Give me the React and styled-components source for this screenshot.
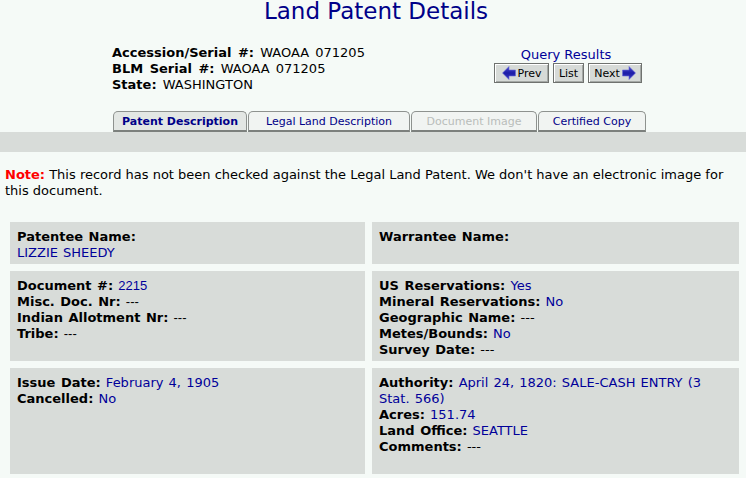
import React from "react";
import styled, { createGlobalStyle } from "styled-components";

const Global = createGlobalStyle`
  html, body { margin: 0; padding: 0; background: #f5faf7; }
  body {
    font-family: "DejaVu Sans", Verdana, sans-serif;
    font-size: 13px;
    color: #000;
  }
`;

const Page = styled.div`
  width: 746px;
`;

const Title = styled.h1`
  margin: -2px 0 -2px;
  padding-left: 6px;
  font-size: 23px;
  line-height: 27px;
  font-weight: normal;
  color: #000088;
  text-align: center;
`;

const HeaderRow = styled.div`
  display: flex;
  align-items: flex-start;
  margin-top: 22px;
  padding-left: 112px;
`;

const InfoBlock = styled.div`
  width: 378px;
  line-height: 16px;
  word-spacing: 2px;
`;

const Line = styled.div`
  line-height: 16px;
  min-height: 16px;
`;

const Label = styled.span`
  font-weight: bold;
`;

const Value = styled.span`
  color: ${(p) => (p.$plain ? "#000" : "#000099")};
  font-family: ${(p) =>
    p.$alt ? '"Liberation Sans", Arial, sans-serif' : 'inherit'};
`;

const QueryBlock = styled.div`
  width: 152px;
  margin-top: 2px;
  display: flex;
  flex-direction: column;
  align-items: center;
`;

const QueryTitle = styled.div`
  color: #000099;
  line-height: 16px;
`;

const ButtonRow = styled.div`
  display: flex;
  column-gap: 4px;
  margin-left: 4px;
`;

const NavButton = styled.button`
  box-sizing: border-box;
  width: ${(p) => p.$w}px;
  height: 20px;
  padding: 0;
  display: flex;
  align-items: center;
  justify-content: center;
  gap: 2px;
  background: #d6dad7;
  border: 1px solid #6f726f;
  box-shadow: inset 1px 1px 0 #ffffff, inset -1px -1px 0 #a4a8a5;
  font-family: "DejaVu Sans", Verdana, sans-serif;
  font-size: 11px;
  color: #000;
  cursor: pointer;
`;

const TabsRow = styled.div`
  display: flex;
  column-gap: 1px;
  margin-top: 18px;
  padding-left: 113px;
`;

const Tab = styled.div`
  box-sizing: border-box;
  width: ${(p) => p.$w}px;
  height: 21px;
  display: flex;
  align-items: center;
  justify-content: center;
  border: 1px solid #8e928f;
  border-bottom: 2px solid #7c807d;
  border-radius: 5px 5px 0 0;
  background: ${(p) => (p.$active ? "#e3e7e4" : "#f1f4f2")};
  font-size: 11px;
  font-weight: ${(p) => (p.$active ? "bold" : "normal")};
  color: ${(p) => (p.$disabled ? "#b9bdba" : "#000088")};
  white-space: nowrap;
`;

const Strip = styled.div`
  height: 20px;
  background: #d8dcd9;
`;

const Note = styled.p`
  margin: 15px 0 0;
  padding: 0 5px;
  line-height: 16px;
`;

const NoteLabel = styled.span`
  color: #ff0000;
  font-weight: bold;
`;

const CardGrid = styled.div`
  display: grid;
  grid-template-columns: 355px 367px;
  gap: 7px;
  margin-top: 23px;
  padding: 0 7px 4px 10px;
`;

const Card = styled.div`
  background: #d8dcd9;
  padding: 7px 12px 3px 7px;
  word-spacing: 1px;
`;

const Arrow = ({ dir }) => (
  <svg width="14" height="14" viewBox="0 0 14 14" aria-hidden="true">
    <defs>
      <linearGradient id={`ag-${dir}`} x1="0" y1="0" x2="0" y2="1">
        <stop offset="0" stopColor="#4b4bd0" />
        <stop offset="0.5" stopColor="#1c1ca8" />
        <stop offset="1" stopColor="#3a3ac0" />
      </linearGradient>
    </defs>
    <polygon
      transform={dir === "right" ? "translate(14,0) scale(-1,1)" : undefined}
      points="0.5,7 7,0.5 7,4 13.5,4 13.5,10 7,10 7,13.5"
      fill={`url(#ag-${dir})`}
      stroke="#6a6ad8"
      strokeWidth="0.6"
    />
  </svg>
);

const tabs = [
  { label: "Patent Description", w: 134, active: true },
  { label: "Legal Land Description", w: 162 },
  { label: "Document Image", w: 126, disabled: true },
  { label: "Certified Copy", w: 108 },
];

export default function App() {
  return (
    <Page>
      <Global />
      <Title>Land Patent Details</Title>

      <HeaderRow>
        <InfoBlock>
          <Line>
            <Label>Accession/Serial #:</Label> WAOAA 071205
          </Line>
          <Line>
            <Label>BLM Serial #:</Label> WAOAA 071205
          </Line>
          <Line>
            <Label>State:</Label> WASHINGTON
          </Line>
        </InfoBlock>
        <QueryBlock>
          <QueryTitle>Query Results</QueryTitle>
          <ButtonRow>
            <NavButton $w={55}>
              <Arrow dir="left" />
              Prev
            </NavButton>
            <NavButton $w={31}>List</NavButton>
            <NavButton $w={54}>
              Next
              <Arrow dir="right" />
            </NavButton>
          </ButtonRow>
        </QueryBlock>
      </HeaderRow>

      <TabsRow>
        {tabs.map((t) => (
          <Tab key={t.label} $w={t.w} $active={t.active} $disabled={t.disabled}>
            {t.label}
          </Tab>
        ))}
      </TabsRow>
      <Strip />

      <Note>
        <NoteLabel>Note:</NoteLabel> This record has not been checked against
        the Legal Land Patent. We don't have an electronic image for this
        document.
      </Note>

      <CardGrid>
        <Card>
          <Line>
            <Label>Patentee Name:</Label>
          </Line>
          <Line>
            <Value>LIZZIE SHEEDY</Value>
          </Line>
        </Card>
        <Card>
          <Line>
            <Label>Warrantee Name:</Label>
          </Line>
        </Card>

        <Card>
          <Line>
            <Label>Document #:</Label> <Value $alt>2215</Value>
          </Line>
          <Line>
            <Label>Misc. Doc. Nr:</Label> <Value $alt $plain>---</Value>
          </Line>
          <Line>
            <Label>Indian Allotment Nr:</Label> <Value $alt $plain>---</Value>
          </Line>
          <Line>
            <Label>Tribe:</Label> <Value $alt $plain>---</Value>
          </Line>
        </Card>
        <Card>
          <Line>
            <Label>US Reservations:</Label> <Value>Yes</Value>
          </Line>
          <Line>
            <Label>Mineral Reservations:</Label> <Value>No</Value>
          </Line>
          <Line>
            <Label>Geographic Name:</Label> ---
          </Line>
          <Line>
            <Label>Metes/Bounds:</Label> <Value>No</Value>
          </Line>
          <Line>
            <Label>Survey Date:</Label> ---
          </Line>
        </Card>

        <Card>
          <Line>
            <Label>Issue Date:</Label> <Value>February 4, 1905</Value>
          </Line>
          <Line>
            <Label>Cancelled:</Label> <Value>No</Value>
          </Line>
        </Card>
        <Card>
          <Line>
            <Label>Authority:</Label>{" "}
            <Value>April 24, 1820: SALE-CASH ENTRY (3 Stat. 566)</Value>
          </Line>
          <Line>
            <Label>Acres:</Label> <Value>151.74</Value>
          </Line>
          <Line>
            <Label>Land Office:</Label> <Value>SEATTLE</Value>
          </Line>
          <Line>
            <Label>Comments:</Label> ---
          </Line>
          <Line />
        </Card>
      </CardGrid>
    </Page>
  );
}
